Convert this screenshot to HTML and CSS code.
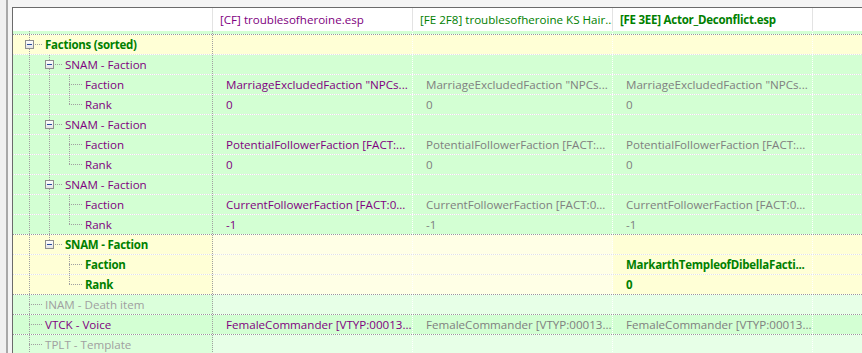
FILE: index.html
```html
<!DOCTYPE html>
<html lang="en">
<head>
  <meta charset="UTF-8">
  <title>Record view</title>
  <link rel="stylesheet" href="styles.css">
</head>
<body>
  <div class="window">
    <div class="edge"></div>
    <div class="splitter"></div>

    <div class="pane">
      <div class="tree">

        <!-- column headers -->
        <div class="head">
          <div class="hcell"></div>
          <div class="hcell purple">[CF] troublesofheroine.esp</div>
          <div class="hcell green">[FE 2F8] troublesofheroine KS Hair...</div>
          <div class="hcell green bold">[FE 3EE] Actor_Deconflict.esp</div>
          <div class="hcell fill"></div>
        </div>

        <!-- tail of the row scrolled above -->
        <div class="row stub g dark">
          <div class="cell name"><span class="sl pipe"></span></div>
          <div class="cell"></div>
          <div class="cell"></div>
          <div class="cell"></div>
          <div class="cell fill"></div>
        </div>

        <div class="row y">
          <div class="cell name"><span class="sl last tee"><span class="btn"></span></span><span class="green bold">Factions (sorted)</span></div>
          <div class="cell"></div>
          <div class="cell"></div>
          <div class="cell"></div>
          <div class="cell fill"></div>
        </div>

        <!-- SNAM 1 -->
        <div class="row g">
          <div class="cell name"><span class="sl pipe"></span><span class="sl last tee"><span class="btn"></span></span><span class="purple">SNAM - Faction</span></div>
          <div class="cell"></div>
          <div class="cell"></div>
          <div class="cell"></div>
          <div class="cell fill"></div>
        </div>
        <div class="row g">
          <div class="cell name"><span class="sl pipe"></span><span class="sl pipe"></span><span class="sl last tee"></span><span class="purple">Faction</span></div>
          <div class="cell purple">MarriageExcludedFaction "NPCs...</div>
          <div class="cell gray">MarriageExcludedFaction "NPCs...</div>
          <div class="cell gray">MarriageExcludedFaction "NPCs...</div>
          <div class="cell fill"></div>
        </div>
        <div class="row g">
          <div class="cell name"><span class="sl pipe"></span><span class="sl pipe"></span><span class="sl last end"></span><span class="purple">Rank</span></div>
          <div class="cell purple">0</div>
          <div class="cell gray">0</div>
          <div class="cell gray">0</div>
          <div class="cell fill"></div>
        </div>

        <!-- SNAM 2 -->
        <div class="row g">
          <div class="cell name"><span class="sl pipe"></span><span class="sl last tee"><span class="btn"></span></span><span class="purple">SNAM - Faction</span></div>
          <div class="cell"></div>
          <div class="cell"></div>
          <div class="cell"></div>
          <div class="cell fill"></div>
        </div>
        <div class="row g">
          <div class="cell name"><span class="sl pipe"></span><span class="sl pipe"></span><span class="sl last tee"></span><span class="purple">Faction</span></div>
          <div class="cell purple">PotentialFollowerFaction [FACT:...</div>
          <div class="cell gray">PotentialFollowerFaction [FACT:...</div>
          <div class="cell gray">PotentialFollowerFaction [FACT:...</div>
          <div class="cell fill"></div>
        </div>
        <div class="row g">
          <div class="cell name"><span class="sl pipe"></span><span class="sl pipe"></span><span class="sl last end"></span><span class="purple">Rank</span></div>
          <div class="cell purple">0</div>
          <div class="cell gray">0</div>
          <div class="cell gray">0</div>
          <div class="cell fill"></div>
        </div>

        <!-- SNAM 3 -->
        <div class="row g">
          <div class="cell name"><span class="sl pipe"></span><span class="sl last tee"><span class="btn"></span></span><span class="purple">SNAM - Faction</span></div>
          <div class="cell"></div>
          <div class="cell"></div>
          <div class="cell"></div>
          <div class="cell fill"></div>
        </div>
        <div class="row g">
          <div class="cell name"><span class="sl pipe"></span><span class="sl pipe"></span><span class="sl last tee"></span><span class="purple">Faction</span></div>
          <div class="cell purple">CurrentFollowerFaction [FACT:0...</div>
          <div class="cell gray">CurrentFollowerFaction [FACT:0...</div>
          <div class="cell gray">CurrentFollowerFaction [FACT:0...</div>
          <div class="cell fill"></div>
        </div>
        <div class="row g dark">
          <div class="cell name"><span class="sl pipe"></span><span class="sl pipe"></span><span class="sl last end"></span><span class="purple">Rank</span></div>
          <div class="cell purple">-1</div>
          <div class="cell gray">-1</div>
          <div class="cell gray">-1</div>
          <div class="cell fill"></div>
        </div>

        <!-- SNAM 4, only in the last plugin -->
        <div class="row y">
          <div class="cell name"><span class="sl pipe"></span><span class="sl last end"><span class="btn"></span></span><span class="green bold">SNAM - Faction</span></div>
          <div class="cell soft"></div>
          <div class="cell soft"></div>
          <div class="cell"></div>
          <div class="cell fill"></div>
        </div>
        <div class="row y">
          <div class="cell name"><span class="sl pipe"></span><span class="sl"></span><span class="sl last tee"></span><span class="green bold">Faction</span></div>
          <div class="cell soft"></div>
          <div class="cell soft"></div>
          <div class="cell green bold">MarkarthTempleofDibellaFacti...</div>
          <div class="cell fill"></div>
        </div>
        <div class="row y dark">
          <div class="cell name"><span class="sl pipe"></span><span class="sl"></span><span class="sl last end"></span><span class="green bold">Rank</span></div>
          <div class="cell soft"></div>
          <div class="cell soft"></div>
          <div class="cell green bold">0</div>
          <div class="cell fill"></div>
        </div>

        <div class="row lg dark">
          <div class="cell name"><span class="sl last tee"></span><span class="muted">INAM - Death item</span></div>
          <div class="cell"></div>
          <div class="cell"></div>
          <div class="cell"></div>
          <div class="cell fill"></div>
        </div>
        <div class="row g dark">
          <div class="cell name"><span class="sl last tee"></span><span class="purple">VTCK - Voice</span></div>
          <div class="cell purple">FemaleCommander [VTYP:00013...</div>
          <div class="cell gray">FemaleCommander [VTYP:00013...</div>
          <div class="cell gray">FemaleCommander [VTYP:00013...</div>
          <div class="cell fill"></div>
        </div>
        <div class="row lg">
          <div class="cell name"><span class="sl last tee"></span><span class="muted">TPLT - Template</span></div>
          <div class="cell"></div>
          <div class="cell"></div>
          <div class="cell"></div>
          <div class="cell fill"></div>
        </div>

      </div>
    </div>
  </div>
</body>
</html>
```

FILE: styles.css
```css
body {
  margin: 0;
  background-color: #f0f0f0;
  font-family: 'Open Sans', 'Liberation Sans', sans-serif;
  font-size: 11.6px;
  color: #000;
}

.window {
  display: flex;
  height: 353px;
  overflow: hidden;
}

.edge {
  width: 6px;
  background-color: #f0f0f0;
}

.splitter {
  width: 2px;
  background-color: #a8a8a8;
}

.pane {
  flex: 1;
  padding: 7px 0 0 4px;
  background-color: #f4f4f4;
  min-width: 0;
}

.tree {
  height: 100%;
  background-color: #fff;
  border-top: 1px solid #6b6b6b;
  border-left: 1px solid #6b6b6b;
  overflow: hidden;
}

/* header */
.head {
  display: flex;
  height: 23px;
}

.hcell {
  width: 200px;
  flex: none;
  box-sizing: border-box;
  padding-left: 7px;
  line-height: 23px;
  border-right: 1px solid #e3e3e3;
  white-space: nowrap;
  overflow: hidden;
}

.hcell.fill,
.cell.fill {
  flex: 1;
  border-right: none;
}

/* rows */
.row {
  display: flex;
  background-color: #fff;
  border-bottom: 1px dotted #e2e2e2;
}

.row.dark {
  border-bottom-color: #9a9a9a;
}

.cell {
  width: 200px;
  height: 19px;
  flex: none;
  box-sizing: border-box;
  padding-left: 13px;
  line-height: 19px;
  border-right: 1px dotted #fff;
  white-space: nowrap;
  overflow: hidden;
}

.cell.name {
  display: flex;
  align-items: flex-start;
  padding-left: 6px;
  border-right-color: #a0a0a0;
  overflow: visible;
}

.row.stub .cell {
  height: 3px;
}

.row.g .cell { background-color: #d3ffd3; }
.row.lg .cell { background-color: #e7ffe7; }
.row.lg .cell.name { background-color: #dbffdb; }
.row.y .cell { background-color: #ffffd6; }
.row.y .cell.soft { background-color: #ffffe6; }

/* tree connectors */
.sl {
  --dots-v: repeating-linear-gradient(to bottom, #a0a0a0 0 1px, transparent 1px 2px);
  --dots-h: repeating-linear-gradient(to right, #a0a0a0 0 1px, transparent 1px 2px);
  flex: none;
  display: flex;
  align-items: flex-start;
  width: 20px;
  height: 20px;
  background-repeat: no-repeat;
}

.row.stub .sl {
  height: 4px;
}

.sl.last {
  width: 26px;
}

.sl.pipe {
  background-image: var(--dots-v);
  background-size: 1px 100%;
  background-position: 10px 0;
}

.sl.tee {
  background-image: var(--dots-v), var(--dots-h);
  background-size: 1px 100%, 14px 1px;
  background-position: 10px 0, 10px 9px;
}

.sl.end {
  background-image: var(--dots-v), var(--dots-h);
  background-size: 1px 10px, 14px 1px;
  background-position: 10px 0, 10px 9px;
}

.btn {
  display: flex;
  align-items: center;
  justify-content: center;
  width: 9px;
  height: 9px;
  box-sizing: border-box;
  margin: 5px 0 0 6px;
  border: 1px solid #8e8e8e;
  background: linear-gradient(#ffffff, #e4e4e4);
}

.btn::before {
  content: "";
  width: 5px;
  height: 1px;
  background-color: #2a4d9c;
}

/* text colours */
.purple { color: #800080; }
.green { color: #008000; }
.gray { color: #808080; }
.muted { color: #a0a0a0; }
.bold {
  font-weight: bold;
  font-size: 11.5px;
  letter-spacing: -0.25px;
}
```
